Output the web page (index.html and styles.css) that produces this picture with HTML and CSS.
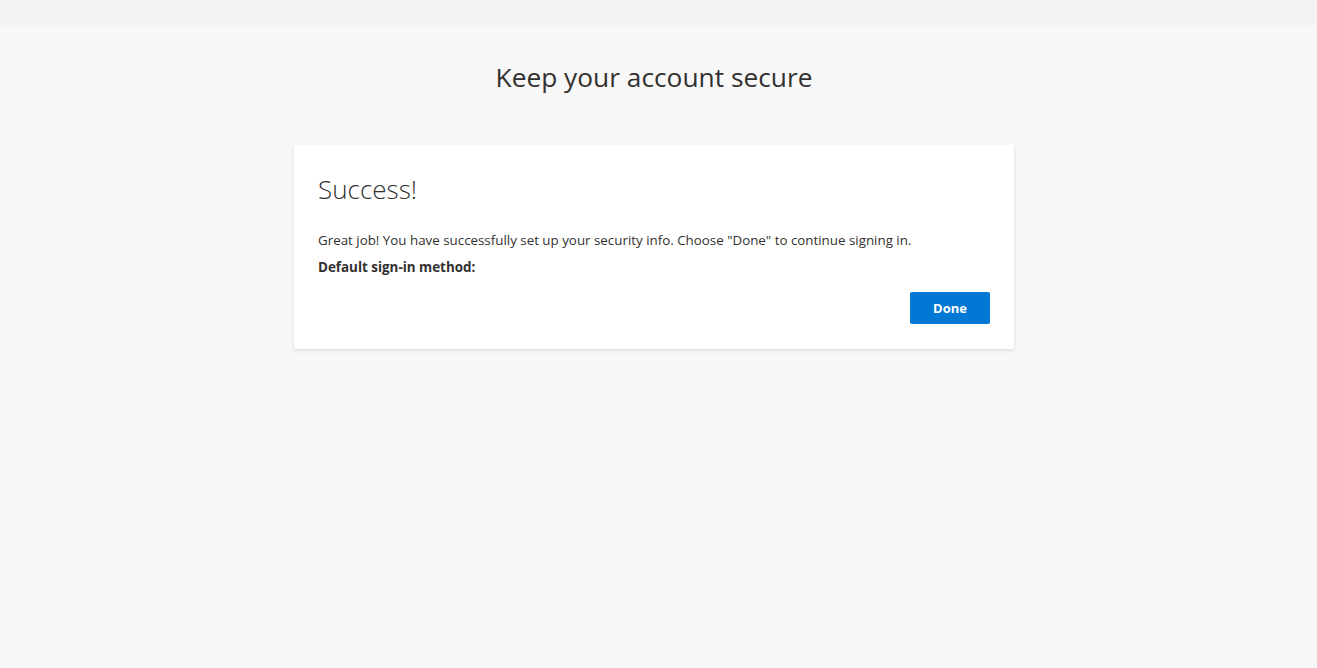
FILE: index.html
```html
<!DOCTYPE html>
<html lang="en">
<head>
<meta charset="utf-8">
<title>Keep your account secure</title>
<link rel="stylesheet" href="styles.css">
</head>
<body>
<div class="topbar"></div>
<main class="page">
  <h1 class="page-title">Keep your account secure</h1>
  <section class="card">
    <h2 class="card-title">Success!</h2>
    <p class="card-text">Great job! You have successfully set up your security info. Choose "Done" to continue signing in.</p>
    <p class="card-label">Default sign-in method:</p>
    <div class="actions">
      <button class="btn-primary" type="button">Done</button>
    </div>
  </section>
</main>
</body>
</html>
```
FILE: styles.css
```css
html, body {
  margin: 0;
  padding: 0;
}
body {
  background: #f8f8f8;
  font-family: "Segoe UI", "Open Sans", "Noto Sans", sans-serif;
  color: #323130;
  height: 668px;
}
.topbar {
  height: 25px;
  background: #f3f2f1;
}
.page {
  display: flex;
  flex-direction: column;
  align-items: center;
  padding-right: 9px;
}
.page-title {
  margin: 34px 0 0;
  font-size: 26.3px;
  font-weight: 400;
  line-height: 36px;
  color: #323130;
}
.card {
  margin-top: 50px;
  width: 720px;
  box-sizing: border-box;
  background: #fff;
  padding: 26px 24px 25px;
  box-shadow: 0 1.6px 3.6px rgba(0,0,0,0.13), 0 0.3px 0.9px rgba(0,0,0,0.11);
}
.card-title {
  margin: 0;
  font-size: 26px;
  font-weight: 300;
  line-height: 36px;
  color: #323130;
}
.card-text {
  margin: 23px 0 0;
  font-size: 13.35px;
  line-height: 20px;
}
.card-label {
  margin: 7px 0 0;
  font-size: 13.4px;
  line-height: 20px;
  font-weight: 700;
}
.actions {
  display: flex;
  justify-content: flex-end;
  margin-top: 15px;
}
.btn-primary {
  width: 80px;
  height: 32px;
  border: none;
  border-radius: 2px;
  background: #0078d4;
  color: #fff;
  font-family: inherit;
  font-size: 13px;
  font-weight: 700;
  padding: 0;
}
```
